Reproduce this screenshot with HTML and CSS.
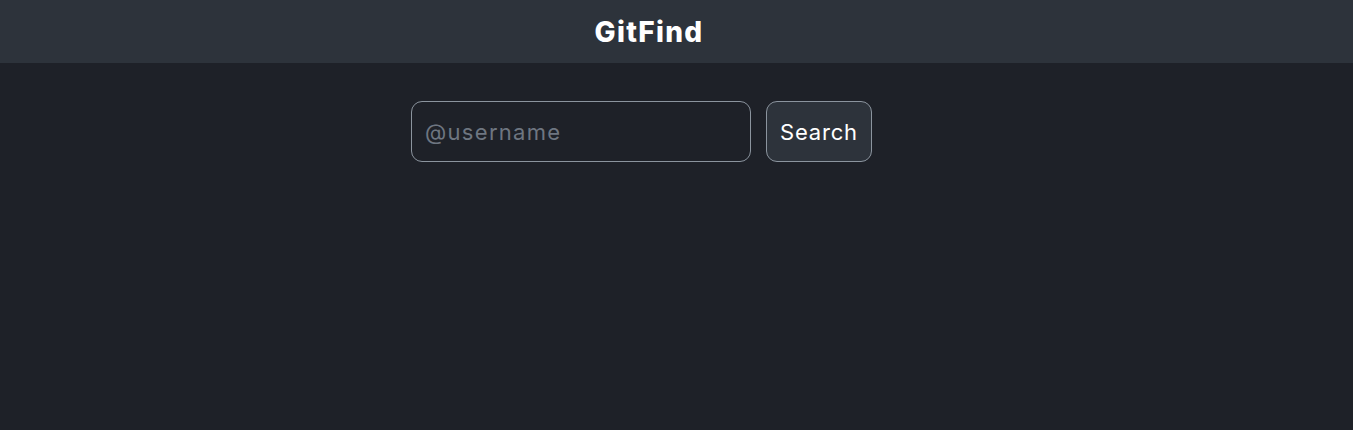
FILE: index.html
```html
<!DOCTYPE html>
<html>
<head>
<meta charset="utf-8">
<link rel="stylesheet" href="styles.css">
<title>GitFind</title>
</head>
<body>
<header class="topbar">
  <h1 class="brand">GitFind</h1>
</header>
<main class="main">
  <form class="search">
    <input class="search-input" type="text" placeholder="@username">
    <button class="search-btn" type="button">Search</button>
  </form>
</main>
</body>
</html>
```
FILE: styles.css
```css
html, body {
  margin: 0;
  padding: 0;
  height: 100%;
}
body {
  background: #1e2128;
  font-family: "Inter", "Open Sans", sans-serif;
  color: #fff;
}
.topbar {
  height: 63px;
  background: #2d333b;
  display: flex;
  align-items: center;
  justify-content: center;
  padding-right: 55px;
  box-sizing: border-box;
}
.brand {
  margin: 0;
  font-size: 28px;
  font-weight: 800;
  letter-spacing: 1.3px;
  color: #fff;
}
.main {
  display: flex;
  justify-content: center;
  padding: 38px 70px 0 0;
}
.search {
  display: flex;
  gap: 15px;
}
.search-input {
  width: 340px;
  height: 61px;
  box-sizing: border-box;
  border: 1px solid #8b949e;
  border-radius: 11px;
  background: #1e2128;
  padding: 0 13px;
  font-family: inherit;
  font-size: 22px;
  letter-spacing: 1.3px;
  color: #fff;
  outline: none;
}
.search-input::placeholder {
  color: #6e7681;
}
.search-btn {
  width: 106px;
  height: 61px;
  box-sizing: border-box;
  border: 1px solid #8b949e;
  border-radius: 11px;
  background: #2d333b;
  color: #fff;
  font-family: inherit;
  font-size: 22px;
  letter-spacing: 0.8px;
  padding: 0;
}
```
